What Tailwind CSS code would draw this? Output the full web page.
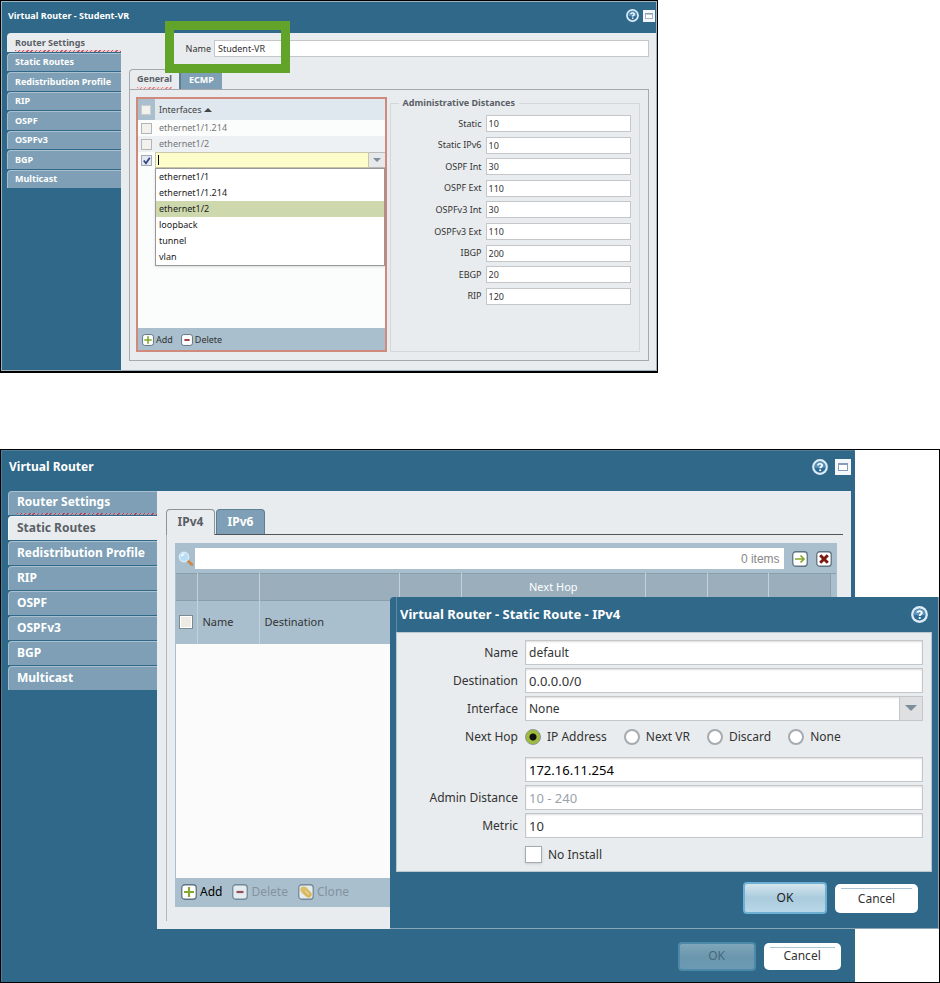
<!DOCTYPE html>
<html lang="en">
<head>
    <meta charset="UTF-8">
    <meta name="viewport" content="width=device-width, initial-scale=1">
    <title>Virtual Router</title>
    <script src="https://cdn.jsdelivr.net/npm/@tailwindcss/browser@4"></script>
</head>
<body class="bg-white font-['Noto_Sans','Open_Sans',sans-serif] text-[#333]">

    <!-- icons -->
    <svg class="hidden">
        <symbol id="help" viewBox="0 0 16 16">
            <circle cx="8" cy="8" r="7.900" fill="#dcebf5"/>
            <circle cx="8" cy="8" r="5.700" fill="#2f6a94"/>
            <path d="M2.600 8a5.400 5.400 0 0 1 10.800 0c-3 1.500-7.800 1.500-10.800 0z" fill="#5b95bd"/>
            <path d="M6 6.400C6 4.200 10.200 4.200 10.200 6.400 10.200 7.800 8.200 7.800 8.200 9.300" fill="none" stroke="#fff" stroke-width="1.700"/>
            <rect x="7.300" y="10.400" width="1.800" height="1.700" fill="#fff"/>
        </symbol>
        <symbol id="window" viewBox="0 0 16 16">
            <rect width="16" height="16" fill="#f4f7fa"/>
            <rect x="3.500" y="4.500" width="9" height="7" fill="#fff" stroke="#8a9db8"/>
            <rect x="3" y="4" width="10" height="2" fill="#8a9db8"/>
        </symbol>
        <symbol id="plus" viewBox="0 0 16 16">
            <rect x=".75" y=".75" width="14.500" height="14.500" rx="3" fill="#fff" stroke="#5f7482" stroke-width="1.300"/>
            <path d="M8 3v10M3 8h10" stroke="#86a82c" stroke-width="2.200"/>
        </symbol>
        <symbol id="minus" viewBox="0 0 16 16">
            <rect x=".75" y=".75" width="14.500" height="14.500" rx="3" fill="#fff" stroke="#5f7482" stroke-width="1.300"/>
            <path d="M4.500 8h7" stroke="#8a1c28" stroke-width="2.200"/>
        </symbol>
        <symbol id="clone" viewBox="0 0 16 16">
            <rect x=".75" y=".75" width="14.500" height="14.500" rx="3" fill="#fff" stroke="#5f7482" stroke-width="1.300"/>
            <ellipse cx="6.500" cy="6.500" rx="4.600" ry="3.600" transform="rotate(40 6.500 6.500)" fill="#eebf3d"/>
            <ellipse cx="9.500" cy="9.500" rx="4.600" ry="3.400" transform="rotate(40 9.500 9.500)" fill="#f0b429"/>
            <path d="M7 6.500l4 4" stroke="#fbe3a0" stroke-width="1.200"/>
        </symbol>
        <symbol id="search" viewBox="0 0 16 16">
            <path d="M9.500 9.500l4.300 4" stroke="#c98a4b" stroke-width="3" stroke-linecap="round"/>
            <circle cx="6" cy="6" r="4.700" fill="#b7def5" stroke="#d8edf9" stroke-width="1.400"/>
            <path d="M3.500 5.500a3 3 0 0 1 3-2.300" fill="none" stroke="#fff" stroke-width="1.300"/>
        </symbol>
        <symbol id="go" viewBox="0 0 16 16">
            <rect x=".75" y=".75" width="14.500" height="14.500" rx="3" fill="#fff" stroke="#5f7482" stroke-width="1.300"/>
            <path d="M3 8h9M8.500 4.500L12 8l-3.500 3.500" fill="none" stroke="#86a82c" stroke-width="1.700"/>
        </symbol>
        <symbol id="clear" viewBox="0 0 16 16">
            <rect x=".75" y=".75" width="14.500" height="14.500" rx="3" fill="#fff" stroke="#5f7482" stroke-width="1.300"/>
            <path d="M4.200 4.200l7.600 7.600M11.800 4.200l-7.600 7.600" stroke="#7a1a10" stroke-width="3"/>
        </symbol>
        <symbol id="down" viewBox="0 0 12 8">
            <path d="M0 1h12L6 7z" fill="currentColor"/>
        </symbol>
    </svg>

    <!-- Virtual Router - Student-VR -->
    <section class="relative w-[70%] border border-b-2 border-black text-[9px] leading-3">
        <div class="border border-[#9fb3bf] bg-[#2f6888]">
            <header class="flex h-[31px] items-center justify-between pl-[6px] pr-px">
                <h1 class="pb-1 font-bold text-white">Virtual Router - Student-VR</h1>
                <div class="flex items-center gap-1 pb-1">
                    <button type="button" aria-label="Help"><svg class="block size-[13px]"><use href="#help"/></svg></button>
                    <button type="button" aria-label="Maximize"><svg class="block size-3"><use href="#window"/></svg></button>
                </div>
            </header>
            <div class="flex">
                <nav class="w-[119px] pl-[5px]">
                    <div class="grid h-[155px] auto-rows-fr gap-px font-bold text-white">
                        <a href="#" class="flex flex-col justify-between rounded-tl bg-[#e9ecee] pl-2 pt-1 text-[#5a5f66]">Router Settings
                            <span class="h-[2px] bg-[repeating-linear-gradient(135deg,#c8596b_0_1px,#eccdd2_1px_3px)]"></span>
                        </a>
                        <a href="#" class="flex items-center rounded-tl border-l border-t border-[#a9c0cf] bg-[#7e9fb5] pl-[7px]">Static Routes</a>
                        <a href="#" class="flex items-center rounded-tl border-l border-t border-[#a9c0cf] bg-[#7e9fb5] pl-[7px]">Redistribution Profile</a>
                        <a href="#" class="flex items-center rounded-tl border-l border-t border-[#a9c0cf] bg-[#7e9fb5] pl-[7px]">RIP</a>
                        <a href="#" class="flex items-center rounded-tl border-l border-t border-[#a9c0cf] bg-[#7e9fb5] pl-[7px]">OSPF</a>
                        <a href="#" class="flex items-center rounded-tl border-l border-t border-[#a9c0cf] bg-[#7e9fb5] pl-[7px]">OSPFv3</a>
                        <a href="#" class="flex items-center rounded-tl border-l border-t border-[#a9c0cf] bg-[#7e9fb5] pl-[7px]">BGP</a>
                        <a href="#" class="flex items-center rounded-tl border-l border-t border-[#a9c0cf] bg-[#7e9fb5] pl-[7px]">Multicast</a>
                    </div>
                </nav>
                <div class="flex-1 bg-[#e9ecee] pb-[9px] pl-2 pr-[7px] pt-[7px]">
                    <div class="flex items-center">
                        <label for="vr-name" class="w-[82px] text-right">Name</label>
                        <input id="vr-name" value="Student-VR" class="ml-[3px] h-[17px] min-w-0 flex-1 border border-[#c4c7ca] bg-white px-[3px]">
                    </div>
                    <div class="mt-3 flex h-5 items-end font-bold">
                        <button type="button" class="flex h-5 flex-col justify-between rounded-t border-l border-t border-[#a5a9ad] px-[7px] pt-[3px] text-[#5a5f66]">General
                            <span class="h-[2px] w-full bg-[repeating-linear-gradient(135deg,#e08a8a_0_1px,#f3d9d9_1px_3px)]"></span>
                        </button>
                        <button type="button" class="h-[18px] border-l-2 border-[#5c7f96] bg-[#7e9fb5] px-2 text-white">ECMP</button>
                    </div>
                    <div class="grid min-h-[272px] grid-cols-2 gap-[3px] border border-[#a5a9ad] pb-2 pl-[6px] pr-2 pt-[7px]">
                        <div class="flex flex-col border-2 border-[#d08a7c] bg-[#fbfcfc]">
                            <table class="w-full table-fixed text-left text-[#777]">
                                <thead>
                                    <tr class="h-[21px] bg-[#dfe8ef]">
                                        <th class="w-[17px] bg-[#a9bfcd] pl-[3px]"><input type="checkbox" aria-label="Select all" class="block size-[10px] appearance-none border border-[#ccc] bg-[#f3f1ee]"></th>
                                        <th class="pl-1 font-normal text-[#444]">Interfaces <svg class="inline h-[6px] w-2 rotate-180"><use href="#down"/></svg></th>
                                    </tr>
                                </thead>
                                <tbody>
                                    <tr class="h-4">
                                        <td class="pl-[3px]"><input type="checkbox" aria-label="ethernet1/1.214" class="block size-[11px] appearance-none border border-[#b5b5b5] bg-[#f3f1ee]"></td>
                                        <td class="pl-1">ethernet1/1.214</td>
                                    </tr>
                                    <tr class="h-4 bg-[#edf1f4]">
                                        <td class="pl-[3px]"><input type="checkbox" aria-label="ethernet1/2" class="block size-[11px] appearance-none border border-[#b5b5b5] bg-[#f3f1ee]"></td>
                                        <td class="pl-1">ethernet1/2</td>
                                    </tr>
                                    <tr class="h-4">
                                        <td class="pl-[3px]">
                                            <span class="relative block size-[11px]">
                                                <input type="checkbox" checked aria-label="New interface" class="block size-[11px] appearance-none border border-[#a5aab5] bg-[#e3e8f2]">
                                                <svg viewBox="0 0 10 10" class="pointer-events-none absolute inset-0"><path d="M2.500 5l2 2.500L8 2.500" fill="none" stroke="#33467c" stroke-width="1.600"/></svg>
                                            </span>
                                        </td>
                                        <td>
                                            <div class="relative flex">
                                                <input aria-label="Interface" class="h-4 min-w-0 flex-1 border border-[#c9c9a8] bg-[#fdfdcb] px-1">
                                                <span class="absolute left-[3px] top-[3px] h-[10px] w-px bg-black"></span>
                                                <button type="button" aria-label="Open list" class="flex h-4 w-4 items-center justify-center border-y border-[#bbb] bg-[#e6e8e9] text-[#7d8e99]"><svg class="h-[6px] w-2"><use href="#down"/></svg></button>
                                                <ul class="absolute inset-x-0 top-4 border border-[#999] bg-white text-[#222] shadow">
                                                    <li class="h-4 px-[3px] pt-[2px]">ethernet1/1</li>
                                                    <li class="h-4 px-[3px] pt-[2px]">ethernet1/1.214</li>
                                                    <li class="h-4 bg-[#cdd9ac] px-[3px] pt-[2px]">ethernet1/2</li>
                                                    <li class="h-4 px-[3px] pt-[2px]">loopback</li>
                                                    <li class="h-4 px-[3px] pt-[2px]">tunnel</li>
                                                    <li class="h-4 px-[3px] pt-[2px]">vlan</li>
                                                </ul>
                                            </div>
                                        </td>
                                    </tr>
                                </tbody>
                            </table>
                            <div class="mt-auto flex h-[22px] items-center gap-2 bg-[#a9bfcd] pl-1 pt-[2px]">
                                <button type="button" class="flex items-center gap-[2px]"><svg class="size-3"><use href="#plus"/></svg>Add</button>
                                <button type="button" class="flex items-center gap-[2px]"><svg class="size-3"><use href="#minus"/></svg>Delete</button>
                            </div>
                        </div>
                        <fieldset class="min-w-0 border border-[#d5d8da] px-2">
                            <legend class="px-1 font-bold text-[#5a5f66]">Administrative Distances</legend>
                            <div class="grid h-[198px] auto-rows-fr grid-cols-[83px_1fr] items-center gap-x-1 pt-1 text-right">
                                <label for="d1">Static</label><input id="d1" value="10" class="h-[17px] w-full border border-[#c4c7ca] bg-white px-[2px]">
                                <label for="d2">Static IPv6</label><input id="d2" value="10" class="h-[17px] w-full border border-[#c4c7ca] bg-white px-[2px]">
                                <label for="d3">OSPF Int</label><input id="d3" value="30" class="h-[17px] w-full border border-[#c4c7ca] bg-white px-[2px]">
                                <label for="d4">OSPF Ext</label><input id="d4" value="110" class="h-[17px] w-full border border-[#c4c7ca] bg-white px-[2px]">
                                <label for="d5">OSPFv3 Int</label><input id="d5" value="30" class="h-[17px] w-full border border-[#c4c7ca] bg-white px-[2px]">
                                <label for="d6">OSPFv3 Ext</label><input id="d6" value="110" class="h-[17px] w-full border border-[#c4c7ca] bg-white px-[2px]">
                                <label for="d7">IBGP</label><input id="d7" value="200" class="h-[17px] w-full border border-[#c4c7ca] bg-white px-[2px]">
                                <label for="d8">EBGP</label><input id="d8" value="20" class="h-[17px] w-full border border-[#c4c7ca] bg-white px-[2px]">
                                <label for="d9">RIP</label><input id="d9" value="120" class="h-[17px] w-full border border-[#c4c7ca] bg-white px-[2px]">
                            </div>
                        </fieldset>
                    </div>
                </div>
            </div>
        </div>
        <!-- highlight around the name field -->
        <div class="pointer-events-none absolute left-[164px] top-5 h-[52px] w-[125px] border-9 border-[#62a329]"></div>
    </section>

    <!-- Virtual Router -->
    <section class="relative mt-19 border border-black text-xs leading-4">
        <div class="w-[91%] border-l border-t border-[#4e7d98] bg-[#2f6888]">
            <header class="flex h-10 items-center justify-between pl-[7px] pr-1">
                <h1 class="pb-2 font-bold text-white">Virtual Router</h1>
                <div class="flex items-center gap-[7px] pb-2">
                    <button type="button" aria-label="Help"><svg class="block size-4"><use href="#help"/></svg></button>
                    <button type="button" aria-label="Maximize"><svg class="block size-4"><use href="#window"/></svg></button>
                </div>
            </header>
            <div class="flex pr-1">
                <nav class="w-[155px] pl-[6px]">
                    <div class="grid auto-rows-[24px] gap-px font-bold text-white">
                        <a href="#" class="flex flex-col justify-between rounded-tl border-l border-t border-[#a9c0cf] bg-[#7e9fb5] pl-2 pt-[2px]">Router Settings
                            <span class="h-[2px] bg-[repeating-linear-gradient(135deg,#b8405a_0_1px,#9aa5b8_1px_3px)]"></span>
                        </a>
                        <a href="#" class="flex items-center rounded-tl border-l border-t border-[#f5f6f7] bg-[#e9ecee] pb-px pl-2 text-[#5a5f66]">Static Routes</a>
                        <a href="#" class="flex items-center rounded-tl border-l border-t border-[#a9c0cf] bg-[#7e9fb5] pb-px pl-2">Redistribution Profile</a>
                        <a href="#" class="flex items-center rounded-tl border-l border-t border-[#a9c0cf] bg-[#7e9fb5] pb-px pl-2">RIP</a>
                        <a href="#" class="flex items-center rounded-tl border-l border-t border-[#a9c0cf] bg-[#7e9fb5] pb-px pl-2">OSPF</a>
                        <a href="#" class="flex items-center rounded-tl border-l border-t border-[#a9c0cf] bg-[#7e9fb5] pb-px pl-2">OSPFv3</a>
                        <a href="#" class="flex items-center rounded-tl border-l border-t border-[#a9c0cf] bg-[#7e9fb5] pb-px pl-2">BGP</a>
                        <a href="#" class="flex items-center rounded-tl border-l border-t border-[#a9c0cf] bg-[#7e9fb5] pb-px pl-2">Multicast</a>
                    </div>
                </nav>
                <div class="min-w-0 flex-1 bg-[#e9ecee] pb-2 pl-[9px] pr-2 pt-[18px]">
                    <div class="flex h-[26px] border-b border-[#4e555b] font-bold">
                        <button type="button" class="-mb-px w-[49px] rounded-t border border-b-0 border-[#8b9298] bg-[#e9ecee] pb-[2px] text-[#5a5f66]">IPv4</button>
                        <button type="button" class="ml-px w-[49px] rounded-t border border-b-0 border-[#5c7f96] bg-[#7e9fb5] pb-px text-white">IPv6</button>
                    </div>
                    <div class="border-l border-[#b4b8bb] pb-[14px] pl-2 pr-[6px] pt-2">
                        <div class="border border-[#a9bfcd] bg-[#fbfbfc]">
                            <div class="flex h-[29px] items-center bg-[#a9bfcd] pl-[2px] pr-1">
                                <svg class="size-4"><use href="#search"/></svg>
                                <label class="ml-px flex h-[21px] min-w-0 flex-1 items-center bg-white pr-1 font-['Liberation_Sans',sans-serif] text-[#888]">
                                    <input aria-label="Search" class="h-full min-w-0 flex-1 px-1">0 items
                                </label>
                                <button type="button" aria-label="Apply filter" class="ml-2"><svg class="size-4"><use href="#go"/></svg></button>
                                <button type="button" aria-label="Clear filter" class="ml-2"><svg class="size-4"><use href="#clear"/></svg></button>
                            </div>
                            <table class="w-full table-fixed text-left text-[11px]">
                                <thead>
                                    <tr class="h-[27px] border-y border-[#8a9fae] bg-[#9aaebb] text-white">
                                        <th class="w-[21px] border-r border-[#c3d1da]"></th>
                                        <th class="w-[62px] border-r border-[#c3d1da]"></th>
                                        <th class="w-[140px] border-r border-[#c3d1da]"></th>
                                        <th class="w-[62px] border-r border-[#c3d1da]"></th>
                                        <th class="border-r border-[#c3d1da] text-center font-normal">Next Hop</th>
                                        <th class="w-[62px] border-r border-[#c3d1da]"></th>
                                        <th class="w-[61px] border-r border-[#c3d1da]"></th>
                                        <th class="w-[62px] border-r border-[#8a9fae]"></th>
                                        <th class="w-[5px] bg-[#a9bfcd]"></th>
                                    </tr>
                                    <tr class="h-[43px] bg-[#a9bfcd]">
                                        <th class="border-r border-[#c3d1da] pl-[3px]"><input type="checkbox" aria-label="Select all" class="block size-[14px] appearance-none border border-[#7c8a94] bg-[#eeeae4] shadow-[inset_0_0_0_1px_white]"></th>
                                        <th class="border-r border-[#c3d1da] pl-[5px] font-normal">Name</th>
                                        <th class="pl-[5px] font-normal">Destination</th>
                                        <th colspan="6"></th>
                                    </tr>
                                </thead>
                            </table>
                            <div class="h-[234px]"></div>
                            <div class="flex h-[28px] items-center gap-[10px] bg-[#a9bfcd] pl-[5px]">
                                <button type="button" class="flex items-center gap-[3px] text-black"><svg class="size-4"><use href="#plus"/></svg>Add</button>
                                <button type="button" disabled class="flex items-center gap-[3px] text-[#84939d]"><svg class="size-4 opacity-70"><use href="#minus"/></svg>Delete</button>
                                <button type="button" disabled class="flex items-center gap-[3px] text-[#84939d]"><svg class="size-4 opacity-70"><use href="#clone"/></svg>Clone</button>
                            </div>
                        </div>
                    </div>
                </div>
            </div>
            <footer class="flex h-[53px] items-center justify-end gap-2 pr-[14px] pt-[2px]">
                <button type="button" disabled class="h-[29px] w-[78px] rounded border-2 border-[#4c88a8] bg-linear-to-b from-[#80a6ba] via-[#6b97ae] to-[#6c9ab3] text-[#47687c]">OK</button>
                <button type="button" class="h-[27px] w-[77px] rounded-[5px] bg-white px-[6px] pt-1"><span class="block h-full border-t border-[#a9c5d5]">Cancel</span></button>
            </footer>
        </div>

        <!-- Static Route dialog -->
        <form class="absolute left-[389px] right-0 top-[147px] rounded-tl border-b border-r border-[#8ba6b6] bg-[#2f6888] px-[6px]">
            <header class="flex h-[35px] items-center justify-between border-l border-[#5f8aa3] pb-px pl-[3px] pr-1">
                <h2 class="text-[13px] font-bold text-white">Virtual Router - Static Route - IPv4</h2>
                <button type="button" aria-label="Help"><svg class="block size-[17px]"><use href="#help"/></svg></button>
            </header>
            <div class="grid grid-cols-[121px_1fr] items-center gap-x-[7px] gap-y-[3px] border border-[#b9c7cf] bg-[#e9ecee] pb-[3px] pr-2 pt-[7px]">
                <label for="r-name" class="text-right">Name</label>
                <input id="r-name" value="default" class="h-[25px] w-full border border-[#c4c7ca] bg-white px-[3px] shadow-[inset_0_1px_2px_#ddd]">
                <label for="r-dest" class="text-right">Destination</label>
                <input id="r-dest" value="0.0.0.0/0" class="h-[25px] w-full border border-[#c4c7ca] bg-white px-[3px] text-[13px] shadow-[inset_0_1px_2px_#ddd]">
                <label for="r-if" class="text-right">Interface</label>
                <div class="relative">
                    <select id="r-if" class="block h-[25px] w-full appearance-none border border-[#c4c7ca] bg-white px-[3px] shadow-[inset_0_1px_2px_#ddd]"><option>None</option></select>
                    <span class="pointer-events-none absolute inset-y-0 right-0 flex w-6 items-start justify-center border border-[#c4c7ca] bg-[#dfe0e1] pt-[7px] text-[#7d8e99]"><svg class="h-2 w-3"><use href="#down"/></svg></span>
                </div>
                <span class="pb-1 text-right">Next Hop</span>
                <div class="flex h-[30px] items-center gap-[17px] pb-1">
                    <label class="flex items-center gap-[6px]"><input type="radio" name="hop" checked class="size-4 appearance-none rounded-full border border-[#8d9296] bg-white checked:bg-[radial-gradient(circle,#111_0_3px,#9dbb3c_4px)]">IP Address</label>
                    <label class="flex items-center gap-[6px]"><input type="radio" name="hop" class="size-4 appearance-none rounded-full border-2 border-[#a6abaf] bg-white">Next VR</label>
                    <label class="flex items-center gap-[6px]"><input type="radio" name="hop" class="size-4 appearance-none rounded-full border-2 border-[#a6abaf] bg-white">Discard</label>
                    <label class="flex items-center gap-[6px]"><input type="radio" name="hop" class="size-4 appearance-none rounded-full border-2 border-[#a6abaf] bg-white">None</label>
                </div>
                <input aria-label="Next hop address" value="172.16.11.254" class="col-start-2 h-[25px] w-full border border-[#c4c7ca] bg-white px-[3px] text-[13px] text-black shadow-[inset_0_1px_2px_#ddd]">
                <label for="r-ad" class="text-right">Admin Distance</label>
                <input id="r-ad" placeholder="10 - 240" class="h-[25px] w-full border border-[#c4c7ca] bg-white px-[3px] text-[13px] shadow-[inset_0_1px_2px_#ddd] placeholder:text-[#9aa3ac]">
                <label for="r-metric" class="text-right">Metric</label>
                <input id="r-metric" value="10" class="h-[25px] w-full border border-[#c4c7ca] bg-white px-[3px] text-[13px] shadow-[inset_0_1px_2px_#ddd]">
                <label class="col-start-2 flex h-[27px] items-center gap-[6px]"><input type="checkbox" class="size-[17px] appearance-none border border-[#a6abaf] bg-white shadow-sm">No Install</label>
            </div>
            <footer class="flex h-14 items-center justify-end gap-2 pb-1 pr-[14px]">
                <button type="button" class="h-8 w-[84px] rounded border-2 border-[#6db0d3] bg-linear-to-b from-[#d5e5ee] via-[#a9cbdd] to-[#b9d8e7] text-[#222]">OK</button>
                <button type="button" class="h-[29px] w-[83px] rounded-[5px] bg-white px-[6px] pt-1"><span class="block h-full border-t border-[#a9c5d5] leading-5">Cancel</span></button>
            </footer>
        </form>
    </section>

</body>
</html>
